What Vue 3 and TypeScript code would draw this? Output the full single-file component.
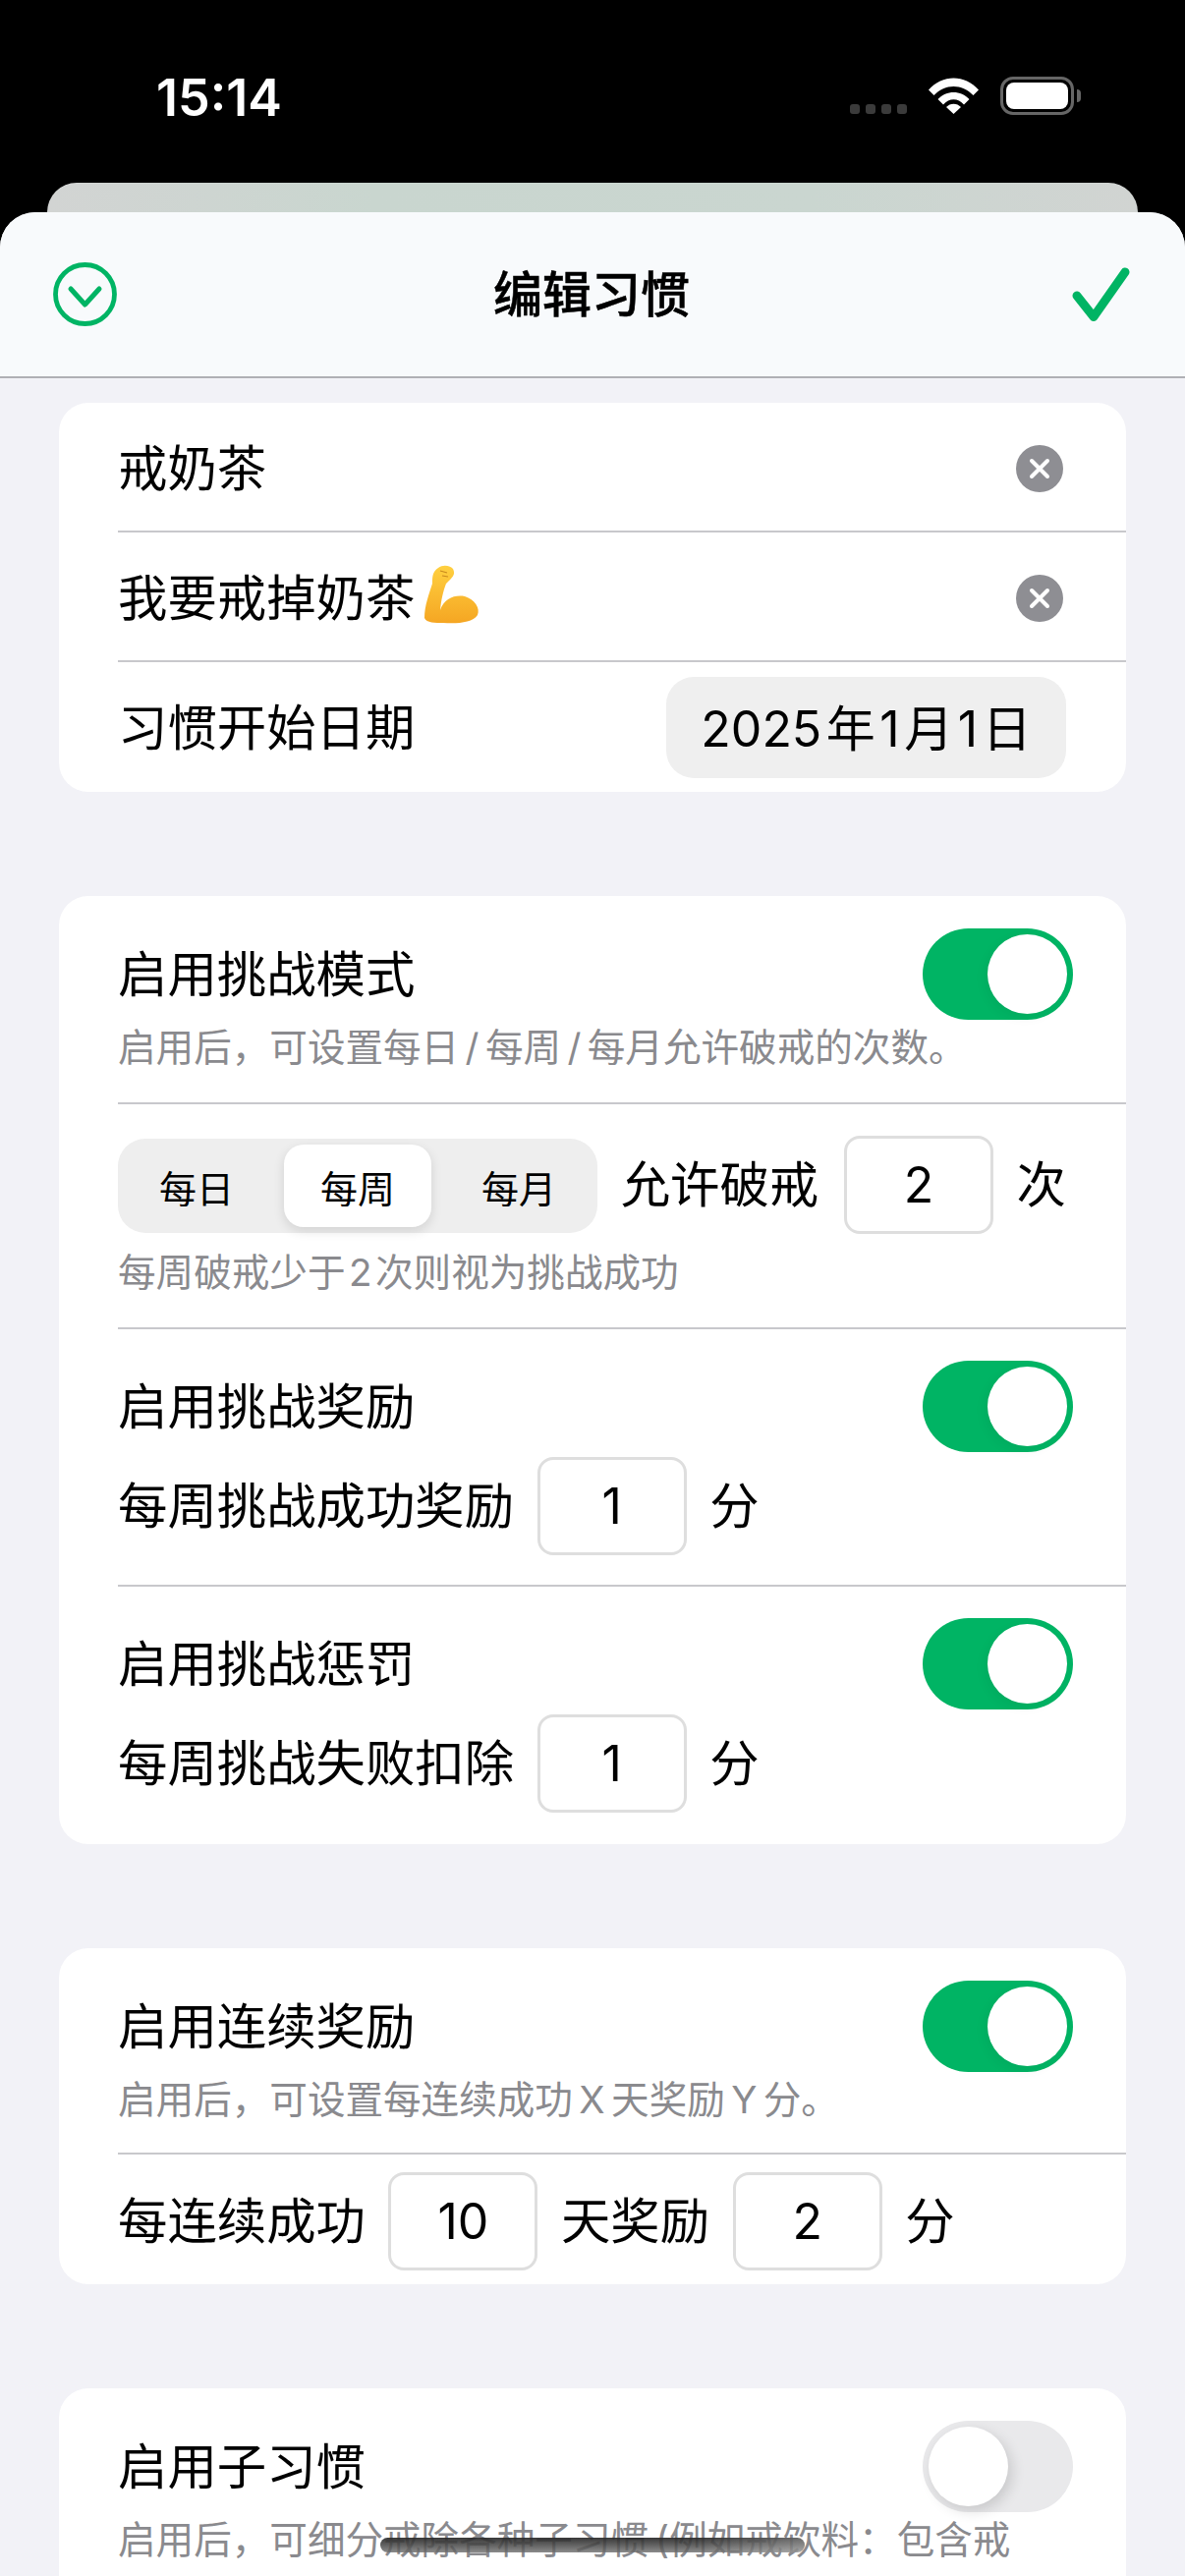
<script setup lang="ts">
import { ref } from 'vue'

const periods: string[] = ['每日', '每周', '每月']
const activePeriod = ref<string>('每周')
const dots: number[] = [0, 1, 2, 3]
</script>

<template>
  <div class="phone">
    <header class="status">
      <span class="time">15:14</span>
      <div class="status-icons">
        <div class="signal">
          <i v-for="d in dots" :key="d"></i>
        </div>
        <svg class="wifi" width="51" height="37" viewBox="0 0 51 37">
          <path d="M0 12.5 C14 -3.5 37 -3.5 51 12.5 L45.5 18 C34 6 17 6 5.500 18 Z" fill="#fff" />
          <path d="M9.500 22 C18 12.500 33 12.500 41.500 22 L36 27.500 C30 20.500 21 20.500 15 27.500 Z" fill="#fff" />
          <path d="M18 30 C22 25.500 29 25.500 33 30 L25.500 37 Z" fill="#fff" />
        </svg>
        <div class="battery">
          <div class="battery-body"><div class="battery-fill"></div></div>
          <div class="battery-cap"></div>
        </div>
      </div>
    </header>

    <div class="peek"></div>

    <section class="sheet">
      <nav class="nav">
        <svg class="nav-close" width="65" height="65" viewBox="0 0 65 65">
          <circle cx="32.500" cy="32.500" r="30" fill="none" stroke="#00b464" stroke-width="4.800" />
          <path d="M18 27 L32.500 43 L47 27" fill="none" stroke="#00b464" stroke-width="5" stroke-linecap="round" stroke-linejoin="round" />
        </svg>
        <h1 class="nav-title">编辑习惯</h1>
        <svg class="nav-done" width="59" height="56" viewBox="0 0 59 56">
          <path d="M5 29 L22 50.500 L54 5" fill="none" stroke="#00b464" stroke-width="9" stroke-linecap="round" stroke-linejoin="round" />
        </svg>
      </nav>

      <main class="content">
        <div class="card">
          <div class="field">
            <span class="label">戒奶茶</span>
            <span class="clear">
              <svg width="24" height="24" viewBox="0 0 24 24"><path d="M4 4 L20 20 M20 4 L4 20" stroke="#fff" stroke-width="4" stroke-linecap="round" /></svg>
            </span>
          </div>
          <div class="field">
            <span class="label with-emoji">
              我要戒掉奶茶
              <svg class="muscle" width="58" height="62" viewBox="0 0 58 62">
                <defs>
                  <linearGradient id="skin" x1="0" y1="0" x2="0" y2="1">
                    <stop offset="0" stop-color="#ffd040" />
                    <stop offset="1" stop-color="#f5a623" />
                  </linearGradient>
                </defs>
                <path d="M1 55 C1 42 6 30 9 20 C9 13 9 8 15 4 C20 0 28 2 30 5 C32 9 31 12 28 15 L23 20 C20 28 18 36 17 47 C21 35 32 31 42 33 C52 36 58 45 55 52 C50 60 34 61 20 60 C12 60 3 60 1 55 Z" fill="url(#skin)" />
                <path d="M17 7 L24 9 M19 12 L25 13" stroke="#c98a1e" stroke-width="1.200" fill="none" />
              </svg>
            </span>
            <span class="clear">
              <svg width="24" height="24" viewBox="0 0 24 24"><path d="M4 4 L20 20 M20 4 L4 20" stroke="#fff" stroke-width="4" stroke-linecap="round" /></svg>
            </span>
          </div>
          <div class="field date-field">
            <span class="label">习惯开始日期</span>
            <span class="date-pill">2025&#8202;年&#8202;1&#8202;月&#8202;1&#8202;日</span>
          </div>
        </div>

        <div class="card">
          <div class="block block-intro">
            <div class="line">
              <span class="label">启用挑战模式</span>
              <span class="toggle on"><i></i></span>
            </div>
            <p class="hint">启用后&#65292;可设置每日&#8198;/&#8198;每周&#8198;/&#8198;每月允许破戒的次数。</p>
          </div>
          <div class="block block-period">
            <div class="line">
              <div class="segments">
                <span
                  v-for="p in periods"
                  :key="p"
                  class="segment"
                  :class="{ active: p === activePeriod }"
                >{{ p }}</span>
              </div>
              <span class="label allow">允许破戒</span>
              <span class="box">2</span>
              <span class="label unit">次</span>
            </div>
            <p class="hint">每周破戒少于&#8202;2&#8202;次则视为挑战成功</p>
          </div>
          <div class="block block-option">
            <div class="line">
              <span class="label">启用挑战奖励</span>
              <span class="toggle on"><i></i></span>
            </div>
            <div class="line tight">
              <span class="label">每周挑战成功奖励</span>
              <span class="box">1</span>
              <span class="label">分</span>
            </div>
          </div>
          <div class="block block-option">
            <div class="line">
              <span class="label">启用挑战惩罚</span>
              <span class="toggle on"><i></i></span>
            </div>
            <div class="line tight">
              <span class="label">每周挑战失败扣除</span>
              <span class="box">1</span>
              <span class="label">分</span>
            </div>
          </div>
        </div>

        <div class="card">
          <div class="block block-intro short">
            <div class="line">
              <span class="label">启用连续奖励</span>
              <span class="toggle on"><i></i></span>
            </div>
            <p class="hint">启用后&#65292;可设置每连续成功&#8198;X&#8198;天奖励&#8198;Y&#8198;分。</p>
          </div>
          <div class="block block-streak">
            <div class="line tight">
              <span class="label">每连续成功</span>
              <span class="box">10</span>
              <span class="label">天奖励</span>
              <span class="box">2</span>
              <span class="label">分</span>
            </div>
          </div>
        </div>

        <div class="card card-tail">
          <div class="block block-intro">
            <div class="line">
              <span class="label">启用子习惯</span>
              <span class="toggle"><i></i></span>
            </div>
            <p class="hint">启用后&#65292;可细分戒除各种子习惯&#8201;(例如戒饮料&#65306;包含戒</p>
          </div>
        </div>
      </main>
    </section>

    <div class="home-bar"></div>
  </div>
</template>

<style>
html,
body {
  margin: 0;
  background: #000;
}
</style>

<style scoped>
.phone {
  position: relative;
  display: flex;
  flex-direction: column;
  width: 1206px;
  height: 2622px;
  overflow: hidden;
  background: #000;
  color: #000;
  font-family: Inter, "Noto Sans CJK SC", sans-serif;
}

/* status bar */
.status {
  display: flex;
  align-items: flex-start;
  justify-content: space-between;
  height: 186px;
  box-sizing: border-box;
  padding: 70px 106px 0 159px;
  flex: none;
}
.time {
  color: #fff;
  font-size: 52px;
  font-weight: 600;
  line-height: 60px;
}
.status-icons {
  display: flex;
  align-items: flex-end;
  margin-top: -1px;
  padding-top: 9px;
  height: 39px;
}
.signal {
  display: flex;
  gap: 6px;
  margin-bottom: 1px;
  margin-right: 22px;
}
.signal i {
  display: block;
  width: 10px;
  height: 10px;
  border-radius: 3px;
  background: #3b3b3b;
}
.wifi {
  margin-right: 22px;
  margin-bottom: 1px;
}
.battery {
  display: flex;
  align-items: center;
}
.battery-body {
  box-sizing: border-box;
  width: 75px;
  height: 39px;
  padding: 3px;
  border: 3px solid #666;
  border-radius: 13px;
}
.battery-fill {
  width: 100%;
  height: 100%;
  background: #fff;
  border-radius: 8px;
}
.battery-cap {
  width: 4px;
  height: 13px;
  margin-left: 3px;
  background: #666;
  border-radius: 0 6px 6px 0;
}

/* the card behind the sheet */
.peek {
  flex: none;
  height: 30px;
  margin: 0 48px;
  border-radius: 30px 30px 0 0;
  background: linear-gradient(90deg, #d2d4d3, #c9d6cf 30%, #cad6d0 70%, #d1d4d2);
}

/* sheet */
.sheet {
  flex: 1;
  min-height: 0;
  border-radius: 36px 36px 0 0;
  overflow: hidden;
  background: #f2f2f7;
}
.nav {
  display: grid;
  grid-template-columns: 1fr auto 1fr;
  align-items: center;
  box-sizing: border-box;
  height: 169px;
  padding: 0 56px 0 54px;
  background: #f8fafc;
  border-bottom: 2px solid #b0b0b5;
}
.nav-title {
  margin: 0;
  font-size: 50px;
  font-weight: 500;
  line-height: 60px;
  -webkit-text-stroke: 0.5px #000;
}
.nav-done {
  justify-self: end;
}
.content {
  display: flex;
  flex-direction: column;
  gap: 106px;
  padding: 25px 60px 0;
}

/* grouped cards */
.card {
  flex: none;
  background: #fff;
  border-radius: 30px;
  padding-left: 60px;
}
.card-tail {
  min-height: 400px;
}
.field {
  display: flex;
  align-items: center;
  justify-content: space-between;
  height: 132px;
  padding-top: 3px;
  padding-right: 64px;
  border-bottom: 2px solid #c8c8cc;
  box-sizing: border-box;
}
.date-field {
  height: 132px;
  border-bottom: none;
  padding-right: 61px;
  padding-top: 15px;
  padding-bottom: 14px;
}
.label {
  font-size: 50.4px;
  line-height: 60px;
  white-space: nowrap;
}
.with-emoji {
  display: inline-flex;
  align-items: center;
}
.muscle {
  margin-left: 9px;
  margin-bottom: 7px;
}
.clear {
  display: flex;
  align-items: center;
  justify-content: center;
  width: 48px;
  height: 48px;
  border-radius: 50%;
  background: #8e8e93;
}
.date-pill {
  display: flex;
  align-items: center;
  justify-content: center;
  box-sizing: border-box;
  width: 407px;
  height: 103px;
  padding-bottom: 5px;
  border-radius: 28px;
  background: #efefef;
  font-size: 50px;
  white-space: nowrap;
}

/* rows with switches and steppers */
.block {
  padding-right: 54px;
  border-bottom: 2px solid #c8c8cc;
}
.block:last-child {
  border-bottom: none;
}
.block-intro {
  padding-top: 33px;
  height: 212px;
  box-sizing: border-box;
}
.block-intro.short {
  height: 210px;
}
.block-period {
  padding-top: 32px;
  height: 229px;
  box-sizing: border-box;
}
.block-period .line {
  align-items: center;
}
.block-period .segments {
  margin-top: 2px;
}
.block-period .box {
  margin-left: 2px;
}
.block-option {
  height: 262px;
  padding-top: 32px;
  box-sizing: border-box;
}
.block-streak {
  padding-top: 18px;
  height: 132px;
  box-sizing: border-box;
}
.line {
  display: flex;
  align-items: center;
  justify-content: space-between;
}
.unit {
  margin-right: 7px;
}
.tight {
  justify-content: flex-start;
  gap: 23.5px;
  margin-top: 5px;
}
.block-streak .tight {
  margin-top: 0;
}
.hint {
  margin: 5px 0 0;
  font-size: 38.6px;
  line-height: 46px;
  color: #8a8a8e;
  white-space: nowrap;
}
.block-period .hint {
  margin-top: 16px;
}
.toggle {
  position: relative;
  display: block;
  flex: none;
  width: 153px;
  height: 93px;
  border-radius: 47px;
  background: #e9e9eb;
}
.toggle.on {
  background: #00b464;
}
.toggle i {
  position: absolute;
  top: 6px;
  left: 6px;
  width: 81px;
  height: 81px;
  border-radius: 50%;
  background: #fff;
  box-shadow: 4px 5px 14px rgba(0, 0, 0, 0.14);
}
.toggle.on i {
  left: auto;
  right: 6px;
  box-shadow: -3px 4px 12px rgba(0, 0, 0, 0.05);
}
.box {
  display: flex;
  align-items: center;
  justify-content: center;
  flex: none;
  box-sizing: border-box;
  width: 152px;
  height: 100px;
  border: 3px solid #dedede;
  border-radius: 16px;
  font-size: 50px;
}
.segments {
  display: flex;
  align-items: center;
  gap: 14px;
  flex: none;
  box-sizing: border-box;
  width: 488px;
  height: 96px;
  padding: 6px 5px;
  border-radius: 28px;
  background: #eeeeee;
}
.segment {
  display: flex;
  align-items: center;
  justify-content: center;
  flex: 1;
  height: 84px;
  border-radius: 20px;
  font-size: 38px;
}
.segment.active {
  background: #fff;
  box-shadow: 0 4px 12px rgba(0, 0, 0, 0.12);
}

/* home indicator over the scrolling content */
.home-bar {
  position: absolute;
  left: 387px;
  bottom: 24px;
  width: 432px;
  height: 15px;
  border-radius: 8px;
  background:
    linear-gradient(90deg, rgba(255, 255, 255, 0) 75%, rgba(255, 255, 255, 0.25)),
    linear-gradient(180deg, rgba(40, 40, 40, 0.92), rgba(110, 110, 110, 0.8));
  filter: blur(0.6px);
}
</style>
